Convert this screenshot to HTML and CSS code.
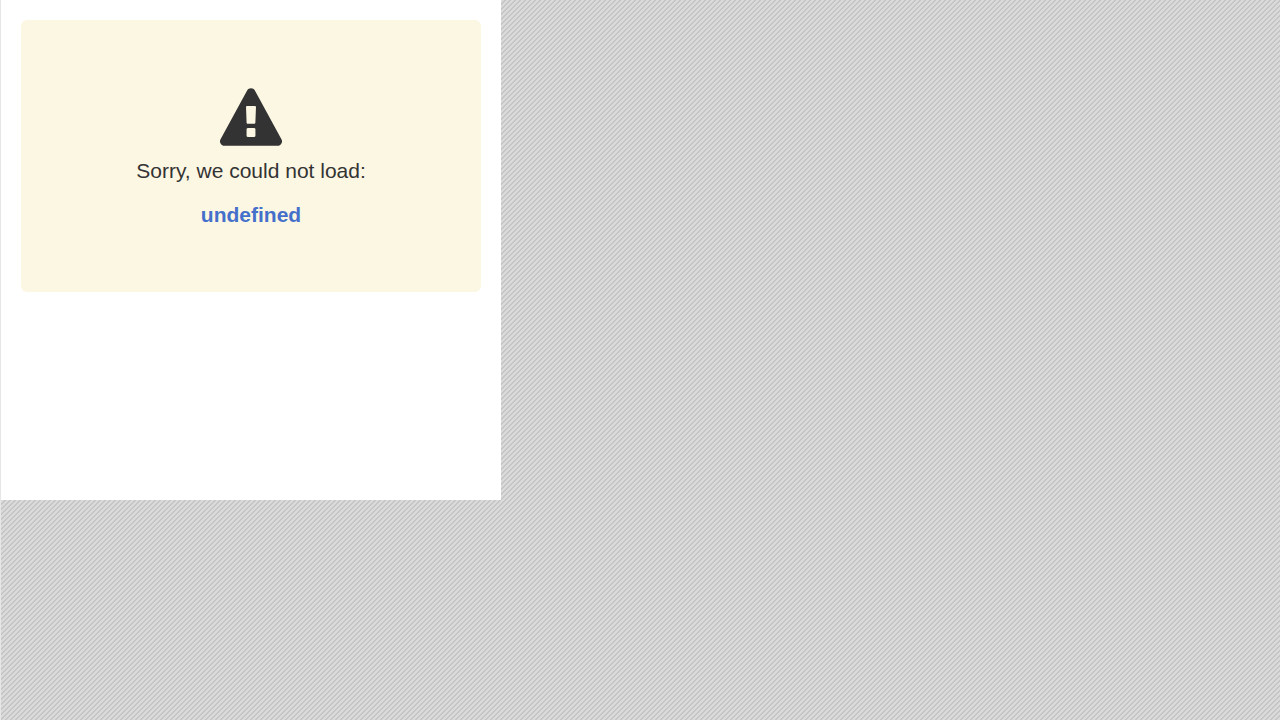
FILE: index.html
```
<!DOCTYPE html>
<html lang="en">
<head>
<meta charset="utf-8">
<title>Could not load</title>
<link rel="stylesheet" href="styles.css">
</head>
<body class="page">
<main class="panel">
<section class="notice" role="alert">
<svg class="notice-icon" viewBox="0 0 1792 1664" aria-hidden="true"><path fill="currentColor" d="M1024 1375v-190q0-14-9.500-23.500t-22.500-9.500h-192q-13 0-22.500 9.500t-9.500 23.500v190q0 14 9.500 23.500t22.500 9.500h192q13 0 22.500-9.500t9.500-23.500zm-2-374l18-459q0-12-10-19-13-11-24-11h-220q-11 0-24 11-10 7-10 21l17 457q0 10 10 16.500t24 6.500h185q14 0 23.500-6.500t10.500-16.500zm-14-934l768 1408q35 63-2 126-17 29-46.500 46t-63.500 17h-1536q-34 0-63.500-17t-46.500-46q-37-63-2-126l768-1408q17-31 47-49t65-18 65 18 47 49z"/></svg>
<p class="notice-text">Sorry, we could not load:</p>
<a class="notice-link" href="#">undefined</a>
</section>
</main>
</body>
</html>
```
FILE: styles.css
```
.page {
  box-sizing: border-box;
  min-height: 100vh;
  margin: 0;
  border-left: 1px solid #e6e6e6;
  background: #d2d2d2 linear-gradient(135deg, #c5c5c5 10%, #dadada 20% 40%, #c5c5c5 50% 60%, #dadada 70% 90%, #c5c5c5 100%) 0 0 / 5px 5px;
  color: #333;
  font-family: "Liberation Sans", Arial, sans-serif;
  font-size: 21px;
  line-height: 24px;
}

.panel {
  box-sizing: border-box;
  max-width: 500px;
  min-height: 500px;
  padding: 20px;
  background: #fff;
}

.notice {
  display: flex;
  flex-direction: column;
  align-items: center;
  padding: 68px 20px 65px;
  border-radius: 6px;
  background: #fcf7e3;
  text-align: center;
}

.notice-icon {
  width: 62px;
  height: 58px;
}

.notice-text {
  margin: 13px 0 20px;
}

.notice-link {
  color: #4470cc;
  font-weight: bold;
  text-decoration: none;
}
```
